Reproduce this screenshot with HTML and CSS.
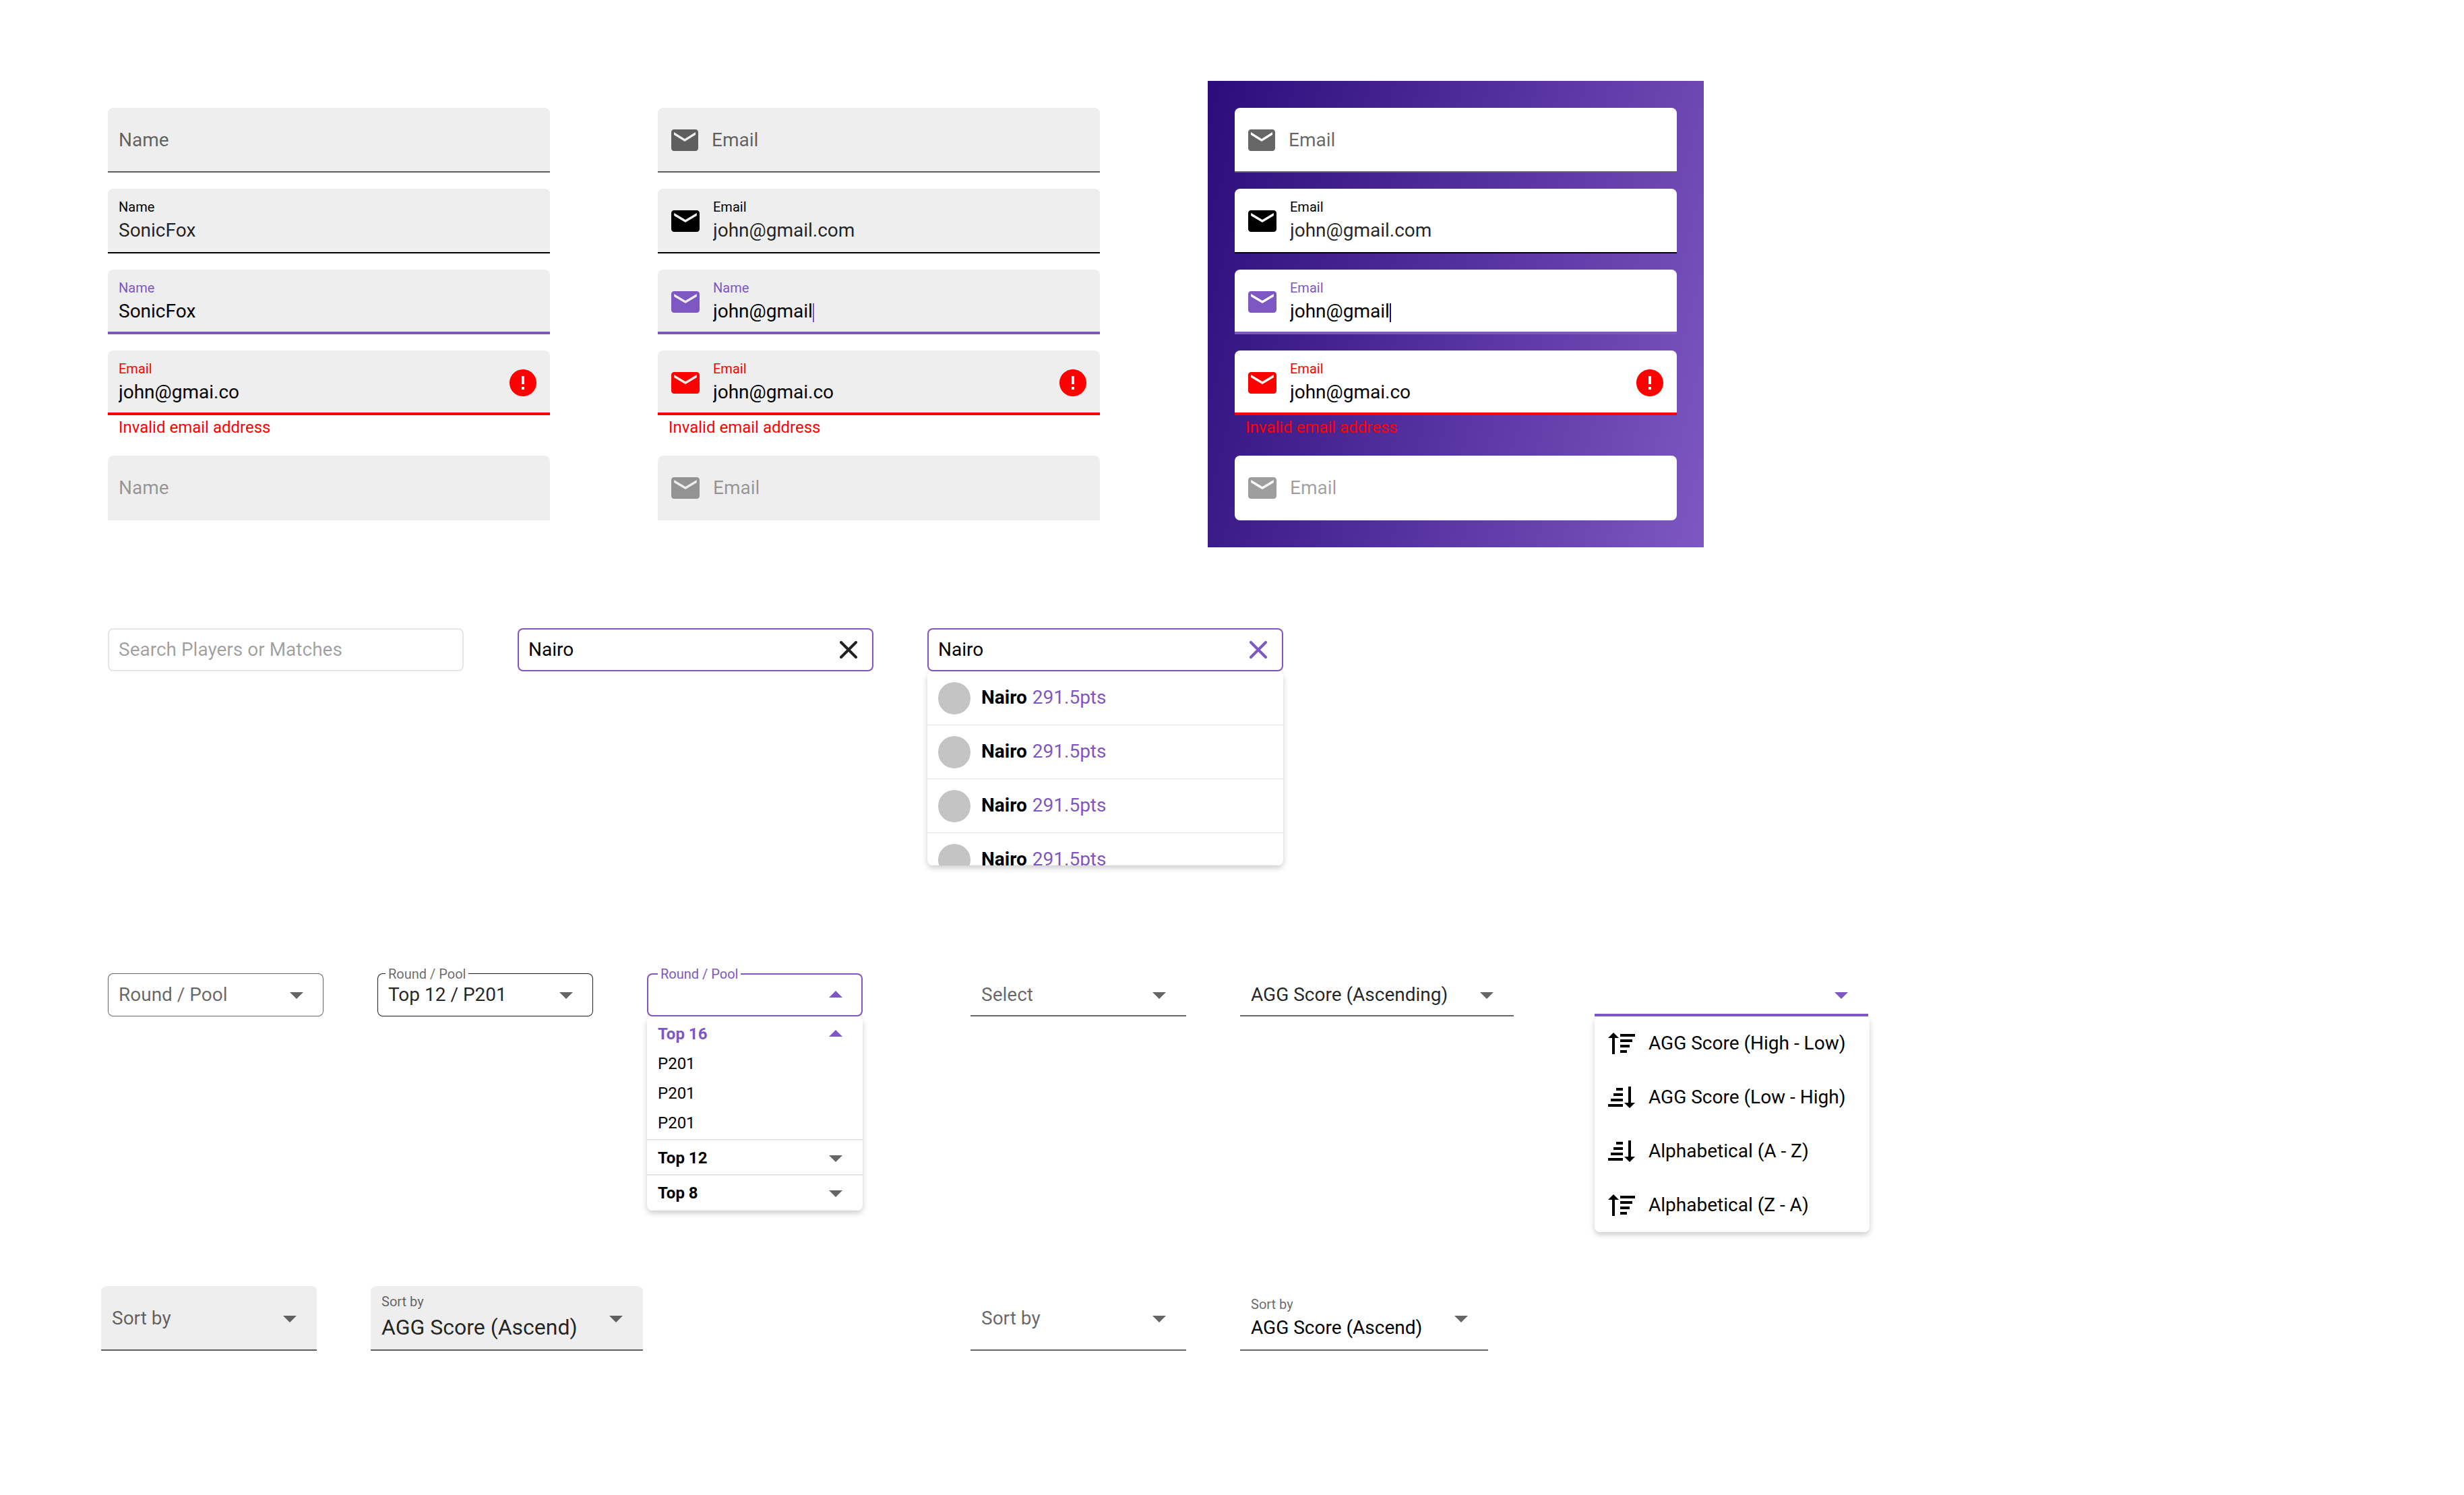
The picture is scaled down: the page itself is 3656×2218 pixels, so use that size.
FILE: index.html
```html
<!DOCTYPE html>
<html lang="en">
<head>
<meta charset="utf-8">
<meta name="viewport" content="width=device-width, initial-scale=1">
<title>Form inputs</title>
<link rel="stylesheet" href="styles.css">
</head>
<body>
<svg class="sprite" aria-hidden="true">
  <symbol id="mail" viewBox="2 4 20 16" preserveAspectRatio="none"><path d="M20 4H4c-1.100 0-1.990.9-1.990 2L2 18c0 1.100.9 2 2 2h16c1.100 0 2-.9 2-2V6c0-1.100-.9-2-2-2zm0 4l-8 5-8-5V6l8 5 8-5v2z"/></symbol>
  <symbol id="alert" viewBox="0 0 24 24"><path d="M12 2C6.480 2 2 6.480 2 12s4.480 10 10 10 10-4.480 10-10S17.520 2 12 2zm1 15h-2v-2h2v2zm0-4h-2V7h2v6z"/></symbol>
  <symbol id="down" viewBox="0 0 24 24"><path d="M7 10l5 5 5-5z"/></symbol>
  <symbol id="up" viewBox="0 0 24 24"><path d="M7 14l5-5 5 5z"/></symbol>
  <symbol id="close" viewBox="0 0 26 26"><path d="M2 2L24 24M24 2L2 24" fill="none" stroke="currentColor" stroke-width="4" stroke-linecap="round"/></symbol>
  <symbol id="sort-up" viewBox="0 0 40 32"><path d="M8 0L16 8H10V32H6V8H0zM18 2H40V6H18zM18 10H36V14H18zM18 18H32V22H18zM18 26H28V30H18z"/></symbol>
  <symbol id="sort-down" viewBox="0 0 40 32"><path d="M32 32L24 24H30V0H34V24H40zM22 30H0V26H22zM22 22H4V18H22zM22 14H8V10H22zM22 6H12V2H22z"/></symbol>
</svg>

<main class="page">
  <section class="row fields-row">
    <form class="stack">
      <div class="field resting"><input class="input" type="text" placeholder="Name" aria-label="Name"></div>
      <div class="field filled"><div class="body"><label for="n1">Name</label><input class="input" id="n1" type="text" value="SonicFox"></div></div>
      <div class="field active"><div class="body"><label for="n2">Name</label><input class="input" id="n2" type="text" value="SonicFox"></div></div>
      <div>
        <div class="field error"><div class="body"><label for="n3">Email</label><input class="input" id="n3" type="text" value="john@gmai.co"></div><svg class="icon"><use href="#alert"/></svg></div>
        <p class="helper">Invalid email address</p>
      </div>
      <div class="field disabled"><input class="input" type="text" placeholder="Name" aria-label="Name" disabled></div>
    </form>

    <form class="stack">
      <div class="field resting"><svg class="mail"><use href="#mail"/></svg><input class="input" type="text" placeholder="Email" aria-label="Email"></div>
      <div class="field filled"><svg class="mail"><use href="#mail"/></svg><div class="body"><label for="e1">Email</label><input class="input" id="e1" type="text" value="john@gmail.com"></div></div>
      <div class="field active"><svg class="mail"><use href="#mail"/></svg><div class="body"><label for="e2">Name</label><div class="typing"><input class="input" id="e2" type="text" value="john@gmail"><span class="caret"></span></div></div></div>
      <div>
        <div class="field error"><svg class="mail"><use href="#mail"/></svg><div class="body"><label for="e3">Email</label><input class="input" id="e3" type="text" value="john@gmai.co"></div><svg class="icon"><use href="#alert"/></svg></div>
        <p class="helper">Invalid email address</p>
      </div>
      <div class="field disabled"><svg class="mail"><use href="#mail"/></svg><input class="input" type="text" placeholder="Email" aria-label="Email" disabled></div>
    </form>

    <form class="stack panel">
      <div class="field resting"><svg class="mail"><use href="#mail"/></svg><input class="input" type="text" placeholder="Email" aria-label="Email"></div>
      <div class="field filled"><svg class="mail"><use href="#mail"/></svg><div class="body"><label for="p1">Email</label><input class="input" id="p1" type="text" value="john@gmail.com"></div></div>
      <div class="field active"><svg class="mail"><use href="#mail"/></svg><div class="body"><label for="p2">Email</label><div class="typing"><input class="input" id="p2" type="text" value="john@gmail"><span class="caret"></span></div></div></div>
      <div>
        <div class="field error"><svg class="mail"><use href="#mail"/></svg><div class="body"><label for="p3">Email</label><input class="input" id="p3" type="text" value="john@gmai.co"></div><svg class="icon"><use href="#alert"/></svg></div>
        <p class="helper">Invalid email address</p>
      </div>
      <div class="field disabled"><svg class="mail"><use href="#mail"/></svg><input class="input" type="text" placeholder="Email" aria-label="Email" disabled></div>
    </form>
  </section>

  <section class="row search-row">
    <div class="search"><div class="search-box"><input class="input" type="text" placeholder="Search Players or Matches" aria-label="Search"></div></div>
    <div class="search"><div class="search-box on"><input class="input" type="text" value="Nairo" aria-label="Search"><button class="clear" type="button" aria-label="Clear"><svg><use href="#close"/></svg></button></div></div>
    <div class="search open">
      <div class="search-box on"><input class="input" type="text" value="Nairo" aria-label="Search"><button class="clear" type="button" aria-label="Clear"><svg><use href="#close"/></svg></button></div>
      <ul class="menu results">
        <li><span class="avatar"></span><p><b>Nairo</b> <span class="pts">291.5pts</span></p></li>
        <li><span class="avatar"></span><p><b>Nairo</b> <span class="pts">291.5pts</span></p></li>
        <li><span class="avatar"></span><p><b>Nairo</b> <span class="pts">291.5pts</span></p></li>
        <li><span class="avatar"></span><p><b>Nairo</b> <span class="pts">291.5pts</span></p></li>
      </ul>
    </div>
  </section>

  <section class="row select-row">
    <div class="group">
      <div class="select outlined"><select class="input muted" aria-label="Round / Pool"><option>Round / Pool</option></select><svg class="icon"><use href="#down"/></svg></div>
      <div class="select outlined chosen"><label class="notch" for="s1">Round / Pool</label><select class="input" id="s1"><option>Top 12 / P201</option></select><svg class="icon"><use href="#down"/></svg></div>
      <div class="dropdown">
        <div class="select outlined expanded"><label class="notch" for="s2">Round / Pool</label><select class="input" id="s2"><option></option></select><svg class="icon"><use href="#up"/></svg></div>
        <div class="menu pools">
          <button class="round current" type="button">Top 16<svg class="icon"><use href="#up"/></svg></button>
          <ul>
            <li>P201</li>
            <li>P201</li>
            <li>P201</li>
          </ul>
          <button class="round" type="button">Top 12<svg class="icon"><use href="#down"/></svg></button>
          <button class="round" type="button">Top 8<svg class="icon"><use href="#down"/></svg></button>
        </div>
      </div>
    </div>
    <div class="group">
      <div class="select underlined"><select class="input muted" aria-label="Select"><option>Select</option></select><svg class="icon"><use href="#down"/></svg></div>
      <div class="select underlined wide"><select class="input" aria-label="Sort order"><option>AGG Score (Ascending)</option></select><svg class="icon"><use href="#down"/></svg></div>
      <div class="dropdown sorter">
        <div class="select underlined expanded"><select class="input" aria-label="Sort order"><option></option></select><svg class="icon"><use href="#down"/></svg></div>
        <ul class="menu orders">
          <li><svg><use href="#sort-up"/></svg>AGG Score (High - Low)</li>
          <li><svg><use href="#sort-down"/></svg>AGG Score (Low - High)</li>
          <li><svg><use href="#sort-down"/></svg>Alphabetical (A - Z)</li>
          <li><svg><use href="#sort-up"/></svg>Alphabetical (Z - A)</li>
        </ul>
      </div>
    </div>
  </section>

  <section class="row sort-row">
    <div class="group">
      <div class="select underlined tall grey"><select class="input muted" aria-label="Sort by"><option>Sort by</option></select><svg class="icon"><use href="#down"/></svg></div>
      <div class="select underlined tall grey large"><div class="body"><label for="o1">Sort by</label><select class="input" id="o1"><option>AGG Score (Ascend)</option></select></div><svg class="icon"><use href="#down"/></svg></div>
    </div>
    <div class="group">
      <div class="select underlined tall"><select class="input muted" aria-label="Sort by"><option>Sort by</option></select><svg class="icon"><use href="#down"/></svg></div>
      <div class="select underlined tall medium"><div class="body"><label for="o2">Sort by</label><select class="input strong" id="o2"><option>AGG Score (Ascend)</option></select></div><svg class="icon"><use href="#down"/></svg></div>
    </div>
  </section>
</main>
</body>
</html>
```

FILE: styles.css
```css
:root {
  --purple: #7e57c2;
  --deep: #2a0c7a;
  --red: #f00;
  --fill: #eee;
  --line: #e6e6e6;
  --high: rgba(0, 0, 0, .87);
  --medium: rgba(0, 0, 0, .6);
  --low: rgba(0, 0, 0, .38);
}

*, *::before, *::after { box-sizing: border-box; }

body {
  margin: 0;
  background: #fff;
  color: #000;
  font: 28px/32px Roboto, "Liberation Sans", sans-serif;
}

p, ul { margin: 0; padding: 0; list-style: none; }
svg { display: block; flex: none; fill: currentColor; }
.sprite { position: absolute; width: 0; height: 0; }

.page { padding: 120px 160px 160px; }
.row { display: flex; align-items: flex-start; }
.fields-row { gap: 160px; margin-bottom: 120px; }
.search-row { gap: 80px; margin-bottom: 160px; }
.select-row, .sort-row { gap: 160px; }
.select-row { margin-bottom: 80px; }

.input {
  display: block;
  flex: 1;
  width: 100%;
  min-width: 0;
  height: 32px;
  margin: 0;
  padding: 0;
  border: 0;
  outline: 0;
  appearance: none;
  background: none;
  color: inherit;
  font: inherit;
}
.input::placeholder { color: inherit; opacity: 1; }
.input:disabled { opacity: 1; }
.icon { width: 48px; height: 48px; }

/* text fields */
.stack {
  display: flex;
  flex-direction: column;
  flex: 0 1 656px;
  gap: 24px;
  padding: 40px 0;
}
.field {
  display: flex;
  align-items: center;
  gap: 20px;
  height: 96px;
  padding: 0 16px;
  border-radius: 8px 8px 0 0;
  background: var(--fill);
}
.mail { width: 42px; height: 32px; margin-left: 4px; }
.resting .mail { width: 40px; }
.body { flex: 1; min-width: 0; align-self: flex-start; padding-top: 16px; }
.body label { display: block; margin-bottom: 8px; font-size: 20px; line-height: 22px; }

.resting { color: var(--medium); box-shadow: inset 0 -2px var(--medium); }
.filled { box-shadow: inset 0 -2px #000; }
.filled .input { color: var(--high); }
.active { color: var(--purple); box-shadow: inset 0 -4px var(--purple); }
.error { color: var(--red); box-shadow: inset 0 -4px var(--red); }
.active .input, .error .input { color: #000; }
.disabled { color: var(--low); }

.typing { display: flex; align-items: flex-end; }
.typing .input { flex: none; width: auto; field-sizing: content; }
.caret { width: 2px; height: 28px; background: var(--purple); }
.helper { padding: 4px 16px; color: var(--red); font-size: 24px; line-height: 28px; }

.panel {
  flex-basis: 736px;
  padding: 40px;
  background: linear-gradient(105deg, var(--deep), var(--purple));
}
.panel .field { background: #fff; }
.panel .caret { background: var(--deep); }
.panel .disabled { border-radius: 8px; }

/* search */
.search { flex: 0 1 528px; }
.search-box {
  display: flex;
  align-items: center;
  height: 64px;
  padding: 0 24px 0 16px;
  border-radius: 8px;
  box-shadow: inset 0 0 0 2px var(--line);
  color: var(--low);
}
.search-box.on { color: #000; box-shadow: inset 0 0 0 2px var(--purple); }
.clear { padding: 0; border: 0; background: none; color: var(--high); }
.clear svg { width: 26px; height: 26px; }
.open .clear { color: var(--purple); }

.menu {
  overflow: hidden;
  border-radius: 8px;
  background: #fff;
  box-shadow: 0 4px 8px rgba(0, 0, 0, .2);
}
/* three and a half rows, so the list reads as scrollable */
.results { height: 288px; }
.results li {
  display: flex;
  align-items: center;
  gap: 16px;
  height: 80px;
  padding: 0 16px;
  border-bottom: 1px solid var(--line);
}
.results p { display: flex; gap: 8px; padding-bottom: 2px; }
.avatar { width: 48px; height: 48px; border-radius: 50%; background: #c4c4c4; }
.pts { color: var(--purple); }

/* selects */
.group { display: flex; align-items: flex-start; flex: 0 1 auto; gap: 80px; }
.select {
  position: relative;
  display: flex;
  align-items: center;
  width: 320px;
  height: 64px;
  padding: 0 16px;
  color: var(--medium);
}
.select .input { color: var(--high); }
.select .muted { color: var(--medium); }
.select .strong { color: #000; }
.outlined { border-radius: 8px; box-shadow: inset 0 0 0 1px var(--medium); }
.outlined.chosen { box-shadow: inset 0 0 0 1px var(--high); }
.outlined.expanded { box-shadow: inset 0 0 0 2px var(--purple); }
.notch {
  position: absolute;
  top: -10px;
  left: 12px;
  padding: 0 4px;
  background: #fff;
  font-size: 20px;
  line-height: 22px;
}
.expanded { color: var(--purple); }
.expanded .notch { left: 16px; }

.underlined { box-shadow: inset 0 -2px var(--medium); }
.underlined.expanded { width: 406px; box-shadow: inset 0 -4px var(--purple); }
.wide { width: 406px; }
.sorter { width: 408px; margin-left: 40px; }

.round {
  display: flex;
  align-items: center;
  justify-content: space-between;
  width: 100%;
  padding: 2px 16px 0;
  border: 0;
  border-top: 2px solid var(--line);
  background: none;
  color: #000;
  font: bold 24px/28px Roboto, "Liberation Sans", sans-serif;
}
.round .icon { color: var(--medium); }
.current { border-top: 0; }
.current, .current .icon { color: var(--purple); }
.pools { padding-bottom: 2px; }
.pools ul { margin-top: -2px; padding: 0 16px 2px; font-size: 24px; line-height: 44px; }

.orders li { display: flex; align-items: center; gap: 20px; height: 80px; padding: 0 20px; }
.orders svg { width: 40px; height: 32px; }

.tall { height: 96px; }
.grey { border-radius: 8px 8px 0 0; background: var(--fill); }
.medium { width: 368px; }
.large { width: 404px; }
.large .body { padding-top: 12px; }
.large .input { height: 38px; font-size: 32px; line-height: 38px; }
.sort-row .group:first-child { flex-basis: 1130px; margin-left: -10px; }

@media (max-width: 2800px) {
  .row, .group { flex-wrap: wrap; }
}
```
